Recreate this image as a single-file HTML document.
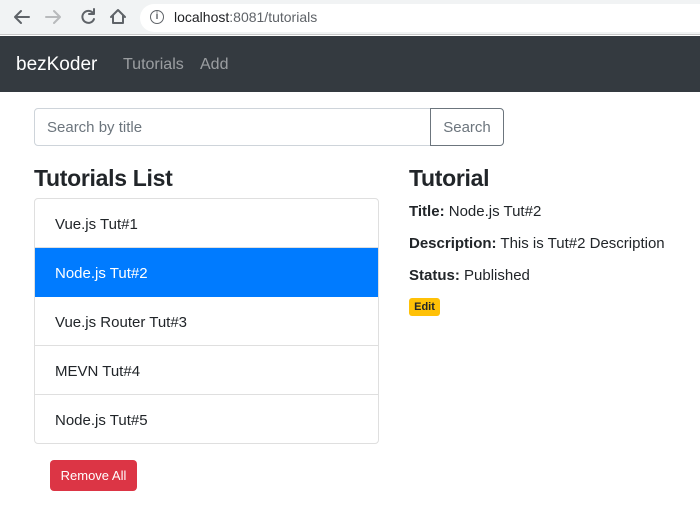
<!DOCTYPE html>
<html><head><style>
*{box-sizing:border-box;margin:0;padding:0}
body{width:700px;height:512px;overflow:hidden;background:#fff;font-family:"Liberation Sans",sans-serif;color:#212529;position:relative}
.a{position:absolute}
</style></head><body>
<div class="a" style="left:0;top:0;width:700px;height:35px;background:#f1f3f4;border-bottom:1px solid #c8c8c8"></div>
<svg class="a" style="left:0;top:0" width="140" height="35">
<g fill="none" stroke-width="2" stroke-linecap="round" stroke-linejoin="round">
<path d="M29 17H16M21 11l-6 6 6 6" stroke="#5f6368"/>
<path d="M46 17h13M54 11l6 6-6 6" stroke="#b8babc"/>
<path d="M93 13a6 6 0 1 0 1 6M94 9v5h-5" stroke="#5f6368"/>
<path d="M111 17l7-7 7 7M113 15v8h10v-8" stroke="#5f6368"/>
</g></svg>
<div class="a" style="left:140px;top:4px;width:560px;height:28px;background:#fff;border-radius:14px 0 0 14px"></div>
<div class="a" style="left:150px;top:10px;width:14px;height:14px;border:1.5px solid #5f6368;border-radius:50%;font-size:10px;line-height:11px;text-align:center;color:#5f6368;font-weight:bold">i</div>
<div class="a" style="left:174px;top:9px;font-size:14px;color:#202124">localhost<span style="color:#5f6368">:8081/tutorials</span></div>
<div class="a" style="left:0;top:36px;width:700px;height:56px;background:#343a40"></div>
<div class="a" style="left:16px;top:54px;font-size:19px;color:#fff">bezKoder</div>
<div class="a" style="left:123px;top:56px;font-size:16px;color:rgba(255,255,255,.5)">Tutorials</div>
<div class="a" style="left:200px;top:56px;font-size:16px;color:rgba(255,255,255,.5)">Add</div>
<div class="a" style="left:34px;top:108px;width:397px;height:38px;border:1px solid #ced4da;border-radius:4px 0 0 4px;padding:10px 12px;font-size:15px;color:#6c757d">Search by title</div>
<div class="a" style="left:430px;top:108px;width:74px;height:38px;border:1px solid #6c757d;border-radius:0 4px 4px 0;padding:10px 0;text-align:center;font-size:15px;color:#6c757d">Search</div>
<div class="a" style="left:34px;top:165px;font-size:23px;font-weight:bold;letter-spacing:-0.3px">Tutorials List</div>
<div class="a" style="left:34px;top:198px;width:345px;height:246px;border:1px solid #dfdfdf;border-radius:4px;overflow:hidden;font-size:15px">
<div style="height:49px;padding:17px 20px;border-bottom:1px solid #dfdfdf">Vue.js Tut#1</div>
<div style="height:49px;padding:17px 20px;background:#007bff;color:#fff">Node.js Tut#2</div>
<div style="height:49px;padding:17px 20px;border-bottom:1px solid #dfdfdf">Vue.js Router Tut#3</div>
<div style="height:49px;padding:17px 20px;border-bottom:1px solid #dfdfdf">MEVN Tut#4</div>
<div style="height:49px;padding:17px 20px">Node.js Tut#5</div>
</div>
<div class="a" style="left:50px;top:460px;width:87px;height:31px;background:#dc3545;border-radius:4px;color:#fff;font-size:13px;text-align:center;line-height:32px">Remove All</div>
<div class="a" style="left:409px;top:165px;font-size:23px;font-weight:bold;letter-spacing:-0.3px">Tutorial</div>
<div class="a" style="left:409px;top:203px;font-size:15px"><b>Title:</b> Node.js Tut#2</div>
<div class="a" style="left:409px;top:235px;font-size:15px"><b>Description:</b> This is Tut#2 Description</div>
<div class="a" style="left:409px;top:267px;font-size:15px"><b>Status:</b> Published</div>
<div class="a" style="left:409px;top:298px;width:31px;height:18px;background:#ffc107;border-radius:3px;font-size:11px;font-weight:bold;text-align:center;line-height:18px">Edit</div>
</body></html>
